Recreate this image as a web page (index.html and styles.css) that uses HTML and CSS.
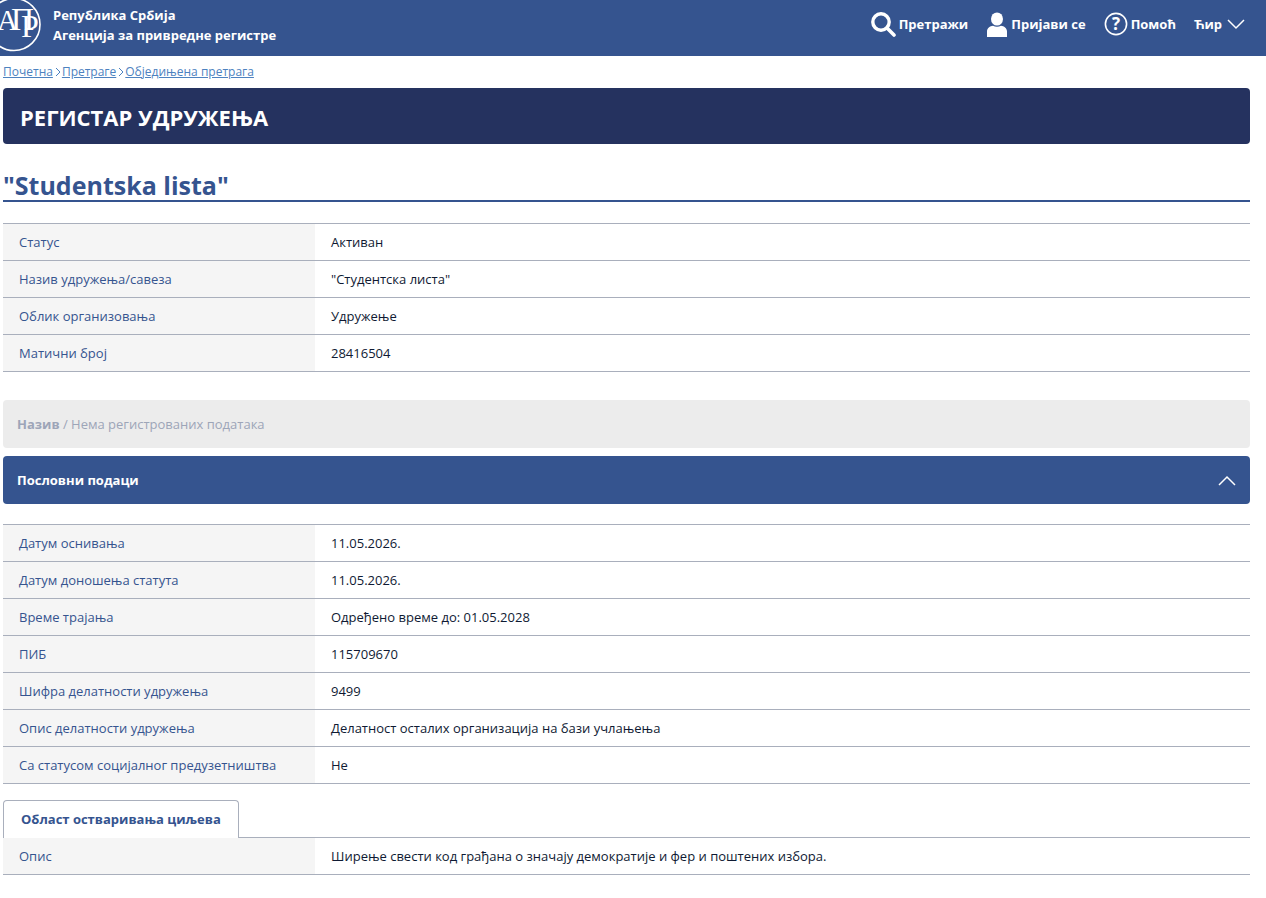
FILE: index.html
```html
<!DOCTYPE html>
<html lang="sr">
<head>
<meta charset="utf-8">
<title>Регистар удружења</title>
<link rel="stylesheet" href="styles.css">
</head>
<body>
<header class="topbar">
  <div class="brand">
    <svg class="logo" width="42" height="56" viewBox="0 0 42 56">
      <circle cx="14" cy="24.5" r="26" fill="none" stroke="#fff" stroke-width="1.6"/>
      <text class="logo-a" x="-3" y="30" >А</text>
      <text class="logo-p" x="11" y="30">П</text>
      <text class="logo-r" x="21" y="37">Р</text>
    </svg>
    <div class="brand-text">
      <div>Република Србија</div>
      <div>Агенција за привредне регистре</div>
    </div>
  </div>
  <nav class="topnav">
    <a class="navitem">
      <svg width="26" height="26" viewBox="0 0 26 26"><circle cx="11" cy="11" r="8.2" fill="none" stroke="#fff" stroke-width="3.4"/><path d="M17 17l7 7" stroke="#fff" stroke-width="3.6" stroke-linecap="round"/></svg>
      <span>Претражи</span>
    </a>
    <a class="navitem">
      <svg width="22" height="25" viewBox="0 0 22 25"><ellipse cx="11" cy="7" rx="6" ry="6.6" fill="#fff"/><path d="M1 25v-5.5c0-3.5 3-5.5 6-5.8 2.400 1.300 5.600 1.300 8 0 3 .3 6 2.300 6 5.800V25z" fill="#fff"/></svg>
      <span>Пријави се</span>
    </a>
    <a class="navitem">
      <svg width="24" height="24" viewBox="0 0 24 24"><circle cx="12" cy="12" r="10.600" fill="none" stroke="#fff" stroke-width="1.600"/><text class="q" x="12" y="18" text-anchor="middle">?</text></svg>
      <span>Помоћ</span>
    </a>
    <a class="navitem lang">
      <span>Ћир</span>
      <svg width="18" height="11" viewBox="0 0 18 11"><path d="M1 1l8 8 8-8" fill="none" stroke="#fff" stroke-width="1.500"/></svg>
    </a>
  </nav>
</header>

<main class="page">
  <div class="crumbs">
    <a>Почетна</a><svg class="sep" width="8" height="10" viewBox="0 0 8 10"><path d="M2 1l4 4-4 4" fill="none" stroke="#4d82c0" stroke-width="1"/></svg><a>Претраге</a><svg class="sep" width="8" height="10" viewBox="0 0 8 10"><path d="M2 1l4 4-4 4" fill="none" stroke="#4d82c0" stroke-width="1"/></svg><a>Обједињена претрага</a>
  </div>
  <h1 class="banner">РЕГИСТАР УДРУЖЕЊА</h1>
  <h2 class="title">"Studentska lista"</h2>

  <div class="rows first">
    <div class="row"><div class="lbl">Статус</div><div class="val">Активан</div></div>
    <div class="row"><div class="lbl">Назив удружења/савеза</div><div class="val">"Студентска листа"</div></div>
    <div class="row"><div class="lbl">Облик организовања</div><div class="val">Удружење</div></div>
    <div class="row"><div class="lbl">Матични број</div><div class="val">28416504</div></div>
  </div>

  <div class="empty"><b>Назив</b> / Нема регистрованих података</div>

  <div class="section">
    <span>Пословни подаци</span>
    <svg width="18" height="11" viewBox="0 0 18 11"><path d="M1 10l8-8 8 8" fill="none" stroke="#fff" stroke-width="1.500"/></svg>
  </div>

  <div class="rows second">
    <div class="row"><div class="lbl">Датум оснивања</div><div class="val">11.05.2026.</div></div>
    <div class="row"><div class="lbl">Датум доношења статута</div><div class="val">11.05.2026.</div></div>
    <div class="row"><div class="lbl">Време трајања</div><div class="val">Одређено време до: 01.05.2028</div></div>
    <div class="row"><div class="lbl">ПИБ</div><div class="val">115709670</div></div>
    <div class="row"><div class="lbl">Шифра делатности удружења</div><div class="val">9499</div></div>
    <div class="row"><div class="lbl">Опис делатности удружења</div><div class="val">Делатност осталих организација на бази учлањења</div></div>
    <div class="row"><div class="lbl">Са статусом социјалног предузетништва</div><div class="val">Не</div></div>
  </div>

  <div class="tabs"><div class="tab">Област остваривања циљева</div></div>
  <div class="rows">
    <div class="row"><div class="lbl">Опис</div><div class="val">Ширење свести код грађана о значају демократије и фер и поштених избора.</div></div>
  </div>
</main>
</body>
</html>
```
FILE: styles.css
```css
* { box-sizing: border-box; }
html, body { margin: 0; padding: 0; background: #fff; }
body { font-family: "Open Sans", "Noto Sans", sans-serif; font-size: 13px; color: #0f1a33; }

.topbar {
  height: 56px;
  background: #35548f;
  color: #fff;
  display: flex;
  justify-content: space-between;
  overflow: hidden;
}
.brand { display: flex; align-items: flex-start; }
.logo { display: block; flex: none; }
.logo-a { font-family: "Liberation Serif", serif; font-size: 29px; fill: #fff; }
.logo-p { font-family: "Liberation Serif", serif; font-size: 32px; fill: #fff; }
.logo-r { font-family: "Liberation Serif", serif; font-size: 32px; fill: #fff; }
.brand-text { margin-left: 11px; padding-top: 5px; font-size: 13px; font-weight: 700; line-height: 20px; }

.topnav { display: flex; align-items: flex-start; padding: 11px 21px 0 0; }
.navitem { display: flex; align-items: center; gap: 3px; margin-left: 18px; height: 26px; font-size: 13px; font-weight: 700; }
.navitem.lang { gap: 5px; }
.q { font-family: "Open Sans", sans-serif; font-size: 17px; font-weight: 700; fill: #fff; }

.page { padding: 0 16px 24px 3px; }

.crumbs { height: 32px; padding-top: 7px; font-size: 12px; line-height: 18px; color: #4d82c0; }
.crumbs a { text-decoration: underline; }
.sep { margin: 0 0 0 1px; vertical-align: -1px; }

.banner {
  margin: 0;
  height: 56px;
  padding: 0 17px;
  background: #25325f;
  border-radius: 4px;
  color: #fff;
  font-size: 22px;
  font-weight: 700;
  line-height: 58px;
}
.title {
  margin: 21px 0 0;
  height: 37px;
  border-bottom: 2px solid #35548f;
  color: #35548f;
  font-size: 25px;
  font-weight: 700;
  line-height: 40px;
}

.rows { border-top: 1px solid #a9afbc; }
.rows.first { margin-top: 21px; }
.rows.second { margin-top: 20px; }
.row { display: flex; height: 37px; border-bottom: 1px solid #a9afbc; line-height: 36px; }
.lbl { flex: none; width: 312px; padding-left: 16px; background: #f5f5f5; color: #35548f; }
.val { padding-left: 16px; }

.empty {
  margin-top: 28px;
  height: 48px;
  padding: 0 14px;
  background: #ececec;
  border-radius: 4px;
  color: #9da5b8;
  line-height: 48px;
}
.section {
  margin-top: 8px;
  height: 48px;
  padding: 0 14px;
  background: #35548f;
  border-radius: 4px;
  color: #fff;
  font-weight: 700;
  display: flex;
  align-items: center;
  justify-content: space-between;
}
.tabs { margin-top: 16px; height: 37px; display: flex; }
.tab {
  height: 38px;
  padding: 0 17px;
  border: 1px solid #a9afbc;
  border-bottom: 0;
  border-radius: 4px 4px 0 0;
  background: #fff;
  color: #35548f;
  font-weight: 700;
  line-height: 36px;
  position: relative;
  z-index: 1;
}
.tabs + .rows { border-top: 1px solid #a9afbc; }
```
